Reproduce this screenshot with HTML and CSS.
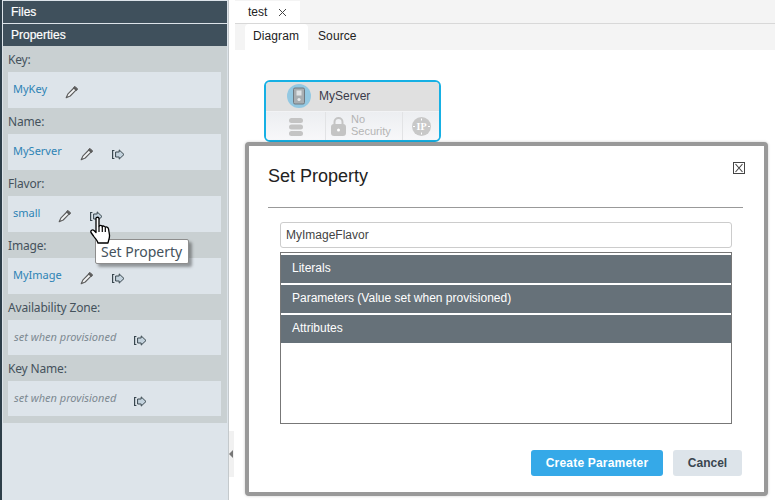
FILE: index.html
```html
<!DOCTYPE html>
<html lang="en">
<head>
    <meta charset="UTF-8" />
    <title>Set Property</title>
    <link rel="stylesheet" href="styles.css">
</head>
<body>
    <svg class="defs" width="0" height="0">
        <symbol id="pencil" viewBox="0 0 13 13">
            <path d="M3 7.8 8.8 2 11 4.2 5.2 10 1.2 11.8Z" fill="#f4f6f7" stroke="#5c5c5c" stroke-width="1.1" stroke-linejoin="round"/>
            <path d="M8.6 1.4 10 .4 12.6 3 11.5 4.6Z" fill="#5c5c5c" stroke="#5c5c5c" stroke-linejoin="round"/>
        </symbol>
        <symbol id="arrow" viewBox="0 0 13 11">
            <path d="M2.4 1.5H.6V9.5H2.4" fill="none" stroke="#39474f" stroke-width="1.2"/>
            <path d="M3.6 3H7.2V.9L12 5.5 7.2 10.1V8H3.6Z" fill="#c3d2dd" stroke="#39474f" stroke-width="1"/>
        </symbol>
    </svg>

    <div class="app">
        <div class="sidebar">
            <div class="acc-head">Files</div>
            <div class="acc-head">Properties</div>
            <div class="props">
                <div class="prop-label">Key:</div>
                <div class="prop-box">
                    <span class="prop-value">MyKey</span>
                    <svg class="ico-pencil"><use href="#pencil"/></svg>
                </div>
                <div class="prop-label">Name:</div>
                <div class="prop-box">
                    <span class="prop-value">MyServer</span>
                    <svg class="ico-pencil"><use href="#pencil"/></svg>
                    <svg class="ico-arrow"><use href="#arrow"/></svg>
                </div>
                <div class="prop-label">Flavor:</div>
                <div class="prop-box">
                    <span class="prop-value">small</span>
                    <svg class="ico-pencil"><use href="#pencil"/></svg>
                    <svg class="ico-arrow"><use href="#arrow"/></svg>
                </div>
                <div class="prop-label">Image:</div>
                <div class="prop-box">
                    <span class="prop-value">MyImage</span>
                    <svg class="ico-pencil"><use href="#pencil"/></svg>
                    <svg class="ico-arrow"><use href="#arrow"/></svg>
                </div>
                <div class="prop-label">Availability Zone:</div>
                <div class="prop-box short">
                    <span class="prop-value unset">set when provisioned</span>
                    <svg class="ico-arrow"><use href="#arrow"/></svg>
                </div>
                <div class="prop-label">Key Name:</div>
                <div class="prop-box short">
                    <span class="prop-value unset">set when provisioned</span>
                    <svg class="ico-arrow"><use href="#arrow"/></svg>
                </div>
            </div>
        </div>

        <div class="splitter">
            <div class="splitter-handle"><span class="splitter-arrow"></span></div>
        </div>

        <div class="main">
            <div class="file-tabs">
                <div class="file-tab">test
                    <svg class="tab-close" width="9" height="9" viewBox="0 0 9 9"><path d="M1 1 8 8M8 1 1 8" stroke="#444" fill="none"/></svg>
                </div>
            </div>
            <div class="view-tabs">
                <div class="view-tab active">Diagram</div>
                <div class="view-tab">Source</div>
            </div>
            <div class="canvas"></div>
        </div>
    </div>

    <!-- node on the diagram -->
    <div class="node">
        <div class="node-head">
            <svg class="node-icon" width="24" height="24" viewBox="0 0 24 24">
                <circle cx="12" cy="12" r="12" fill="#93c8e2"/>
                <rect x="6.5" y="4" width="11" height="16" rx="1.5" fill="#a8aeb2" stroke="#6f7a82"/>
                <rect x="9.5" y="6.5" width="5" height="5" fill="#dfe3e6"/>
                <circle cx="12" cy="15.5" r="1.6" fill="#e6e9eb"/>
            </svg>
            <span>MyServer</span>
        </div>
        <div class="node-foot">
            <div class="node-cell cell-stack">
                <svg width="14" height="18" viewBox="0 0 14 18" fill="#c4c4c4">
                    <rect width="14" height="5" rx="2.5"/>
                    <rect y="6.5" width="14" height="5" rx="2.5"/>
                    <rect y="13" width="14" height="5" rx="2.5"/>
                </svg>
            </div>
            <div class="node-cell cell-security">
                <svg width="15" height="19" viewBox="0 0 15 19">
                    <path d="M3.5 8V5a4 4 0 0 1 8 0V8" fill="none" stroke="#c4c4c4" stroke-width="2"/>
                    <rect y="7" width="15" height="12" rx="3" fill="#c4c4c4"/>
                    <circle cx="7.5" cy="13" r="1.5" fill="#fff"/>
                </svg>
                <span class="no-security">No<br>Security</span>
            </div>
            <div class="node-cell cell-ip">
                <svg width="19" height="19" viewBox="0 0 19 19">
                    <circle cx="9.5" cy="9.5" r="9.5" fill="#c8c8c8"/>
                    <path d="M9.5 1.5V3.5M9.5 15.5V17.5M1 9.5H3M16 9.5H18" stroke="#fff"/>
                    <text class="ip-text" x="9.5" y="13" text-anchor="middle">IP</text>
                </svg>
            </div>
        </div>
    </div>

    <!-- dialog -->
    <div class="dialog">
        <svg class="dialog-close" width="12" height="12" viewBox="0 0 12 12">
            <rect x=".5" y=".5" width="11" height="11" fill="#fff" stroke="#444"/>
            <path d="M2.5 2 9.5 10M9.5 2 2.5 10" stroke="#444" stroke-width="1.1" fill="none"/>
        </svg>
        <h2 class="dialog-title">Set Property</h2>
        <div class="dialog-body">
            <div class="value-input">MyImageFlavor</div>
            <div class="source-list">
                <div class="source-item">Literals</div>
                <div class="source-item">Parameters (Value set when provisioned)</div>
                <div class="source-item">Attributes</div>
            </div>
        </div>
        <div class="dialog-actions">
            <button class="btn btn-primary">Create Parameter</button>
            <button class="btn btn-cancel">Cancel</button>
        </div>
    </div>

    <!-- tooltip and mouse pointer -->
    <div class="tooltip">Set Property</div>
    <svg class="hand" width="22" height="28" viewBox="0 0 22 28">
        <path d="M6 2.5C6 .8 9 .8 9 2.5V10.5C9.5 9 12 9 12.3 10.8 12.8 9.6 15 9.7 15.3 11.5 16 10.5 18 10.8 18.5 12.8L19.5 19C19.8 22 18.5 24 18 27H8C7.5 24.5 5.5 23 3.5 20L1 16.5C.2 14.5 2.5 13 4 14.5L6 16.5Z" fill="#fff" stroke="#000" stroke-width="1.3" stroke-linejoin="round"/>
        <path d="M9 10.5V16M12.3 11V16M15.3 12V16" stroke="#000" stroke-width="1.2" fill="none"/>
    </svg>
</body>
</html>
```

FILE: styles.css
```css
* { box-sizing: border-box; }
html, body { margin: 0; height: 100%; overflow: hidden; }
body { font-family: "Liberation Sans", Arial, sans-serif; font-size: 12px; background: #fff; color: #333; }
.defs { display: block; height: 0; }

.app { display: flex; height: 500px; }

/* left panel */
.sidebar { width: 229px; height: 500px; padding: 1px 1px 0 1px; background: #dde4ea; border-left: 2px solid #2d3e49; border-right: 1px solid #c4c9cc; }
.acc-head { height: 22px; margin-bottom: 1px; padding-left: 8px; background: #3f505c; color: #fff; font-size: 12px; line-height: 22px; -webkit-text-stroke: .2px #fff; }
.acc-head + .acc-head { margin-bottom: 0; }
.props { height: 377px; padding: 0 6px 0 5px; background: #c9d0d2; }
.prop-label { height: 26px; padding-top: 7px; font-family: "Noto Sans", Tahoma, sans-serif; font-size: 12px; line-height: 14px; letter-spacing: -.17px; color: #45525c; }
.prop-box { display: flex; align-items: center; height: 36px; padding: 0 5px; background: #dde4ea; }
.prop-box.short { height: 35px; }
.prop-value { margin-right: 18px; margin-top: -3px; font-family: "Noto Sans", Tahoma, sans-serif; font-size: 11px; line-height: 14px; color: #2d83b5; }
.prop-value.unset { margin-left: 1px; margin-top: -1px; margin-right: 18px; font-style: italic; color: #7d8a92; }
.ico-pencil { width: 13px; height: 13px; margin-right: 19px; margin-top: 5px; }
.ico-arrow { width: 13px; height: 11px; margin-top: 5px; }

/* collapsed splitter */
.splitter { width: 5px; background: #fff; }
.splitter-handle { display: flex; align-items: center; width: 5px; height: 46px; margin-top: 431px; background: #f1f1f1; }
.splitter-arrow { width: 0; height: 0; border-top: 4px solid transparent; border-bottom: 4px solid transparent; border-right: 4px solid #777; }

/* tabs */
.main { flex: 1; display: flex; flex-direction: column; min-width: 0; margin-left: 1px; }
.file-tabs { display: flex; height: 24px; padding-top: 1px; background: #f4f4f4; border-bottom: 1px solid #d8d8d8; }
.file-tab { width: 65px; height: 22px; padding-left: 13px; background: #fff; color: #222; font-size: 12px; line-height: 22px; }
.tab-close { margin-left: 7px; vertical-align: -1px; }
.view-tabs { display: flex; height: 26px; padding-left: 10px; background: #f4f4f4; }
.view-tab { height: 26px; padding: 0 10px; color: #222; font-size: 12px; line-height: 24px; letter-spacing: .1px; }
.view-tab.active { width: 63px; padding-left: 8px; background: #fff; border-radius: 4px 4px 0 0; }
.canvas { flex: 1; background: #fff; }

/* diagram node */
.node { position: absolute; left: 264px; top: 80px; width: 177px; height: 62px; border: 2px solid #16b0e4; border-radius: 6px; overflow: hidden; background: #f2f3f5; }
.node-head { display: flex; align-items: center; height: 29px; padding: 0 0 2px 21px; background: #e0e0e0; font-size: 12px; color: #3a3a4a; }
.node-icon { margin-right: 8px; }
.node-foot { display: flex; height: 29px; margin-top: 1px; background: linear-gradient(#eceef1, #f8f8fa); }
.node-cell { display: flex; align-items: center; justify-content: center; border-right: 1px solid #e2e3e5; }
.cell-stack { width: 60px; }
.cell-security { width: 77px; justify-content: flex-start; padding-left: 5px; }
.cell-ip { flex: 1; border-right: none; }
.no-security { margin-left: 5px; margin-top: -4px; font-size: 11px; line-height: 12px; color: #b4b4b4; }
.ip-text { font-family: "Liberation Serif", serif; font-size: 10px; font-weight: bold; fill: #fff; }

/* dialog */
.dialog { position: absolute; left: 245px; top: 142px; width: 523px; height: 354px; display: flex; flex-direction: column; padding: 0 21px 0 19px; background: #fff; border: 4px solid #999; border-radius: 4px; box-shadow: 0 0 3px rgba(0,0,0,.2); }
.dialog-close { position: absolute; left: 484px; top: 16px; }
.dialog-title { height: 62px; margin: 0; border-bottom: 1px solid #999; font-size: 18px; font-weight: normal; line-height: 60px; color: #222; }
.dialog-body { padding: 14px 11px 0 12px; }
.value-input { height: 26px; padding-left: 5px; background: #fff; border: 1px solid #ccc; border-radius: 3px; color: #444; font-size: 12px; line-height: 24px; }
.source-list { height: 172px; margin-top: 4px; padding-top: 2px; border: 1px solid #777; }
.source-item { height: 28px; margin-bottom: 2px; padding-left: 11px; background: #667179; color: #fff; font-size: 12px; line-height: 27px; }
.dialog-actions { display: flex; justify-content: flex-end; gap: 10px; margin-top: 26px; margin-right: 1px; }
.btn { height: 26px; border: none; border-radius: 3px; font-family: "Liberation Sans", Arial, sans-serif; font-size: 12px; font-weight: bold; }
.btn-primary { width: 132px; background: #35a9e8; color: #fff; letter-spacing: .2px; }
.btn-cancel { width: 69px; background: #dde4ea; color: #3a4650; }

/* tooltip + pointer */
.tooltip { position: absolute; left: 95px; top: 239px; width: 94px; height: 25px; padding-left: 5px; background: #fff; border: 1px solid #8d8d8d; border-radius: 2px; box-shadow: 3px 3px 3px rgba(0,0,0,.35); font-family: "Noto Sans", Tahoma, sans-serif; font-size: 14px; line-height: 23px; color: #45525c; }
.hand { position: absolute; left: 90px; top: 216px; }
```
